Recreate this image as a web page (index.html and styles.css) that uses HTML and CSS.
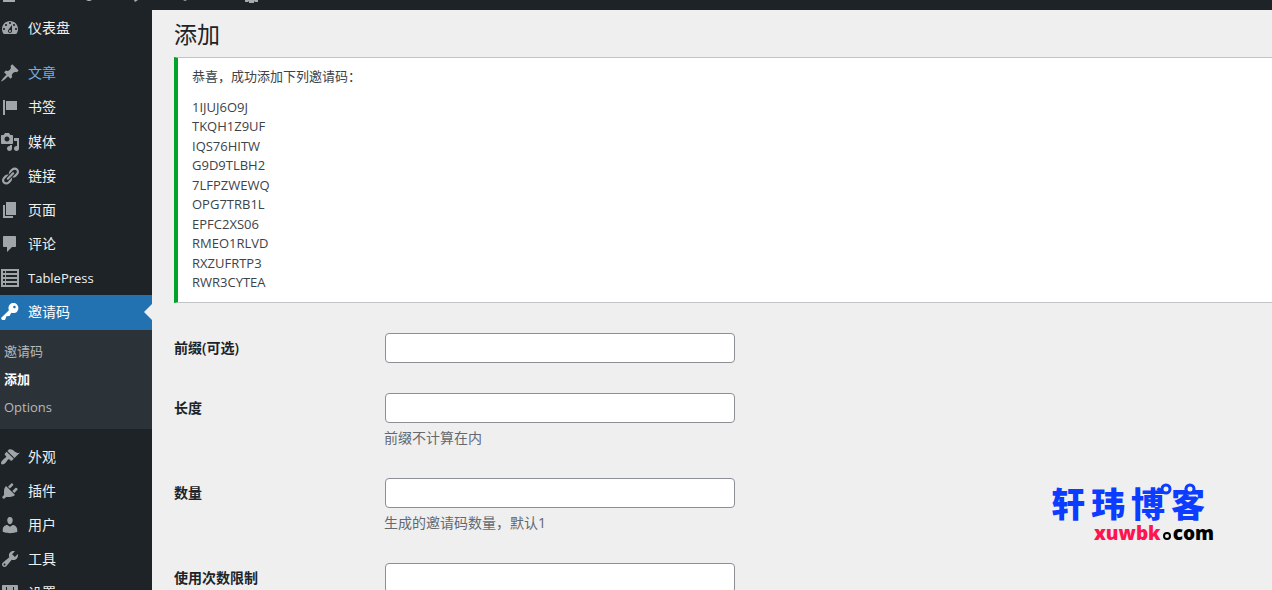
FILE: index.html
```html
<!DOCTYPE html>
<html lang="zh-CN">
<head>
<meta charset="utf-8">
<title>添加</title>
<link rel="stylesheet" href="styles.css">
</head>
<body>
<header class="adminbar">
  <svg class="adminbar-icons" width="270" height="10" viewBox="0 0 270 10" aria-hidden="true">
    <path d="M3 0h12v2H3zM86 0h6l-2 1h-2zM134 0h4l-3 2zM183 0h4l-2 1z"/>
    <path d="M245 0h13v2h-3l-1-1v2h-5V1l-1 1h-3z"/>
  </svg>
</header>
<div class="layout">
  <nav class="sidebar">
    <ul class="menu">
      <li><a class="menu-link" href="#"><svg class="icon" viewBox="0 0 20 20"><path fill-rule="evenodd" d="M3.76 16h12.48c1.1-1.37 1.76-3.11 1.76-5 0-4.42-3.58-8-8-8s-8 3.58-8 8c0 1.89.66 3.63 1.76 5zM10 4c.55 0 1 .45 1 1s-.45 1-1 1-1-.45-1-1 .45-1 1-1zM6 6c.55 0 1 .45 1 1s-.45 1-1 1-1-.45-1-1 .45-1 1-1zm8 0c.55 0 1 .45 1 1s-.45 1-1 1-1-.45-1-1 .45-1 1-1zm-5.37 5.55L12 7v6c0 1.1-.9 2-2 2s-2-.9-2-2c0-.57.24-1.08.63-1.45zM4 10c.55 0 1 .45 1 1s-.45 1-1 1-1-.45-1-1 .45-1 1-1zm12 0c.55 0 1 .45 1 1s-.45 1-1 1-1-.45-1-1 .45-1 1-1zm-5 3c0-.55-.45-1-1-1s-1 .45-1 1 .45 1 1 1 1-.45 1-1z"/></svg>仪表盘</a></li>
      <li class="separator"></li>
      <li><a class="menu-link menu-link-hover" href="#"><svg class="icon" viewBox="0 0 20 20"><path d="M10.44 3.02l1.82-1.82 6.36 6.35-1.83 1.82c-1.05-.68-2.48-.57-3.41.36l-.75.75c-.92.93-1.04 2.35-.35 3.41l-1.83 1.82-2.41-2.41-2.8 2.79c-.42.42-3.38 2.71-3.8 2.29s1.86-3.39 2.28-3.81l2.79-2.79L4.1 9.36l1.83-1.82c1.05.69 2.48.57 3.4-.36l.75-.75c.93-.92 1.05-2.35.36-3.41z"/></svg>文章</a></li>
      <li><a class="menu-link" href="#"><svg class="icon" viewBox="0 0 20 20"><path d="M5 18V3H3v15h2zm1-5V4h11v9z"/></svg>书签</a></li>
      <li><a class="menu-link" href="#"><svg class="icon" viewBox="0 0 20 20"><path fill-rule="evenodd" d="M13 11V4c0-.55-.45-1-1-1h-1.67L9 1H5L3.67 3H2c-.55 0-1 .45-1 1v7c0 .55.45 1 1 1h10c.55 0 1-.45 1-1zM7 4.5c1.38 0 2.5 1.12 2.5 2.5S8.38 9.5 7 9.5 4.5 8.38 4.5 7 5.62 4.5 7 4.5zM14 6h5v10.5c0 1.38-1.12 2.5-2.5 2.5S14 17.88 14 16.5s1.12-2.5 2.5-2.5c.17 0 .34.02.5.05V9h-3V6zm-4 8.05V13h2v3.5c0 1.38-1.12 2.5-2.5 2.5S7 17.88 7 16.5 8.12 14 9.5 14c.17 0 .34.02.5.05z"/></svg>媒体</a></li>
      <li><a class="menu-link" href="#"><svg class="icon" viewBox="0 0 20 20"><path d="M17.74 2.76c1.68 1.69 1.68 4.41 0 6.1l-1.53 1.52c-1.12 1.12-2.7 1.47-4.14 1.09l2.62-2.61.76-.77.76-.76c.84-.84.84-2.2 0-3.04-.84-.85-2.2-.85-3.04 0l-.77.76-3.38 3.38c-.37-1.44-.02-3.02 1.1-4.14l1.52-1.53c1.69-1.68 4.42-1.68 6.1 0zM8.59 13.43l5.34-5.34c.42-.42.42-1.1 0-1.52-.44-.43-1.13-.39-1.53 0l-5.33 5.34c-.42.42-.42 1.1 0 1.52.44.43 1.13.39 1.52 0zm-.76 2.29l4.14-4.15c.38 1.44.03 3.02-1.09 4.14l-1.52 1.53c-1.69 1.68-4.41 1.68-6.1 0-1.68-1.68-1.68-4.42 0-6.1l1.53-1.52c1.12-1.12 2.7-1.47 4.14-1.1l-4.14 4.15c-.85.84-.85 2.2 0 3.05.84.84 2.2.84 3.04 0z"/></svg>链接</a></li>
      <li><a class="menu-link" href="#"><svg class="icon" viewBox="0 0 20 20"><path d="M6 15V2h10v13H6zm-1 1h8v2H3V5h2v11z"/></svg>页面</a></li>
      <li><a class="menu-link" href="#"><svg class="icon" viewBox="0 0 20 20"><path d="M4 2h11c.6 0 1 .4 1 1v9c0 .6-.4 1-1 1h-3l-5 5v-5H4c-.6 0-1-.4-1-1V3c0-.6.4-1 1-1z"/></svg>评论</a></li>
      <li><a class="menu-link menu-link-latin" href="#"><svg class="icon" viewBox="0 0 20 20"><path fill-rule="evenodd" d="M1 1h18v18H1zM3 3v2h2V3zM6 3v2h11V3zM3 7v2h2V7zM6 7v2h11V7zM3 11v2h2v-2zM6 11v2h11v-2zM3 15v2h2v-2zM6 15v2h11v-2z"/></svg>TablePress</a></li>
      <li>
        <a class="menu-link menu-link-current" href="#"><svg class="icon" viewBox="0 0 20 20"><path fill-rule="evenodd" d="M16.95 2.58c1.96 1.95 1.96 5.12 0 7.07-1.51 1.51-3.75 1.84-5.59 1.01l-1.87 3.31-2.99.31L5 18H2l-1-2 7.95-7.69c-.92-1.87-.62-4.18.93-5.73 1.95-1.96 5.12-1.96 7.07 0zm-2.51 3.79c.74 0 1.33-.6 1.33-1.34 0-.73-.59-1.33-1.33-1.33-.73 0-1.33.6-1.33 1.33 0 .74.6 1.34 1.33 1.34z"/></svg>邀请码</a>
        <ul class="submenu">
          <li><a class="submenu-link" href="#">邀请码</a></li>
          <li><a class="submenu-link submenu-link-current" href="#">添加</a></li>
          <li><a class="submenu-link" href="#">Options</a></li>
        </ul>
      </li>
      <li class="separator"></li>
      <li><a class="menu-link" href="#"><svg class="icon" viewBox="0 0 20 20"><path d="M14.48 11.06L7.41 3.99l1.5-1.5c.5-.56 2.3-.47 3.51.32 1.21.8 1.43 1.28 2.91 2.1 1.18.64 2.45 1.26 4.45.85zm-.71.71L6.7 4.7 4.93 6.47c-.39.39-.39 1.02 0 1.41l1.06 1.06c.39.39.39 1.03 0 1.42-.6.6-1.43 1.11-2.21 1.69-.35.26-.7.53-1.01.84C1.43 14.23.4 16.08 1.4 17.07c.99 1 2.84-.03 4.18-1.36.31-.31.58-.66.85-1.02.57-.78 1.08-1.61 1.69-2.21.39-.39 1.02-.39 1.41 0l1.06 1.06c.39.39 1.02.39 1.41 0z"/></svg>外观</a></li>
      <li><a class="menu-link" href="#"><svg class="icon" viewBox="0 0 20 20"><path d="M13.11 4.36L9.87 7.6 8 5.73l3.24-3.24c.35-.34 1.05-.2 1.56.32.52.51.66 1.21.31 1.55zm-8 1.77l.91-1.12 9.01 9.01-1.19.84c-.71.71-2.63 1.16-3.82 1.16H6.14L4.9 17.26c-.59.59-1.54.59-2.12 0-.59-.58-.59-1.53 0-2.12l1.24-1.24v-3.88c0-1.13.4-3.19 1.09-3.89zm7.26 3.97l3.24-3.24c.34-.35 1.04-.21 1.55.31.52.51.66 1.21.31 1.55l-3.24 3.25z"/></svg>插件</a></li>
      <li><a class="menu-link" href="#"><svg class="icon" viewBox="0 0 20 20"><path d="M10 9.25c-2.27 0-2.73-3.44-2.73-3.44C7 4.02 7.82 2 9.97 2c2.16 0 2.98 2.02 2.71 3.81 0 0-.41 3.44-2.68 3.44zm0 2.57L12.72 10c2.39 0 4.52 2.33 4.52 4.53v2.49s-3.65 1.13-7.24 1.13c-3.65 0-7.24-1.13-7.24-1.13v-2.49c0-2.25 1.94-4.48 4.47-4.48z"/></svg>用户</a></li>
      <li><a class="menu-link" href="#"><svg class="icon" viewBox="0 0 20 20"><path fill-rule="evenodd" d="M16.68 9.77c-1.34 1.34-3.3 1.67-4.95.99l-5.41 6.52c-.99.99-2.59.99-3.58 0s-.99-2.59 0-3.57l6.52-5.42c-.68-1.65-.35-3.61.99-4.95 1.28-1.28 3.12-1.62 4.72-1.06l-2.89 2.89 2.82 2.82 2.86-2.87c.53 1.58.18 3.39-1.08 4.65zM3.81 16.21c.4.39 1.04.39 1.43 0 .4-.4.4-1.04 0-1.43-.39-.4-1.03-.4-1.43 0-.39.39-.39 1.03 0 1.43z"/></svg>工具</a></li>
      <li><a class="menu-link" href="#"><svg class="icon" viewBox="0 0 20 20"><path fill-rule="evenodd" d="M3 2h14c.6 0 1 .4 1 1v14c0 .6-.4 1-1 1H3c-.6 0-1-.4-1-1V3c0-.6.4-1 1-1zM6 4v5H5v2h1v5h1v-5h1V9H7V4zM13 4v7h-1v2h1v3h1v-3h1v-2h-1V4z"/></svg>设置</a></li>
    </ul>
  </nav>
  <main class="content">
    <h1 class="title">添加</h1>
    <div class="notice">
      <p>恭喜，成功添加下列邀请码：</p>
      <p>1IJUJ6O9J<br>TKQH1Z9UF<br>IQS76HITW<br>G9D9TLBH2<br>7LFPZWEWQ<br>OPG7TRB1L<br>EPFC2XS06<br>RMEO1RLVD<br>RXZUFRTP3<br>RWR3CYTEA</p>
    </div>
    <form class="form">
      <div class="row">
        <label class="label" for="prefix">前缀(可选)</label>
        <div class="field"><input class="input" id="prefix" type="text"></div>
      </div>
      <div class="row">
        <label class="label" for="length">长度</label>
        <div class="field"><input class="input" id="length" type="text"><p class="hint">前缀不计算在内</p></div>
      </div>
      <div class="row">
        <label class="label" for="count">数量</label>
        <div class="field"><input class="input" id="count" type="text"><p class="hint">生成的邀请码数量，默认1</p></div>
      </div>
      <div class="row">
        <label class="label" for="limit">使用次数限制</label>
        <div class="field"><input class="input" id="limit" type="text"></div>
      </div>
    </form>
  </main>
</div>
<div class="watermark">
  <div class="watermark-name">
    <span>轩</span><span>玮</span><span>博</span><span>客</span>
    <svg class="watermark-rings" width="44" height="14" viewBox="0 0 44 14" aria-hidden="true"><circle cx="8" cy="7" r="4"/><circle cx="32" cy="7" r="4"/></svg>
  </div>
  <div class="watermark-site"><span class="watermark-host">xuwbk</span><span class="watermark-dot"></span>com</div>
</div>
</body>
</html>
```
FILE: styles.css
```css
* { box-sizing: border-box; }

body {
  margin: 0;
  height: 100vh;
  overflow: hidden;
  display: flex;
  flex-direction: column;
  position: relative;
  background: #efefef;
  color: #3c434a;
  font: 13px/1.5 "Open Sans", "Noto Sans CJK SC", sans-serif;
}

ul { list-style: none; margin: 0; padding: 0; }
a { text-decoration: none; }

.adminbar { flex: none; height: 10px; background: #1d2327; }
.adminbar-icons { display: block; fill: #a7aaad; }

.layout { flex: 1; min-height: 0; display: flex; }

.sidebar { flex: none; width: 152px; padding-top: 1px; background: #1d2327; }
.separator { height: 11px; }

.menu-link {
  display: flex;
  align-items: center;
  gap: 8px;
  padding: 8px 0;
  position: relative;
  color: #f0f0f1;
  font-size: 14px;
  line-height: 1.3;
}
.menu-link-latin { font-size: 13px; line-height: 18px; }
.icon { flex: none; width: 20px; height: 20px; margin: -1px 0; fill: #a0a5aa; }
.menu-link-hover { color: #72aee6; }
.menu-link-current { background: #2271b1; color: #fff; }
.menu-link-current .icon { fill: #fff; }
.menu-link-current::after {
  content: "";
  position: absolute;
  right: 0;
  top: 50%;
  margin-top: -8px;
  border: 8px solid transparent;
  border-left-width: 0;
  border-right-color: #efefef;
}

.submenu { padding: 7px 0 8px; background: #2c3338; }
.submenu-link { display: block; padding: 0 4px; color: #b4b9be; line-height: 28px; }
.submenu-link-current { color: #fff; font-weight: 600; }

.content { flex: 1; min-width: 0; padding: 6px 0 0 22px; }
.title { margin: 0; padding: 0 0 5px; color: #1d2327; font-size: 23px; font-weight: 400; line-height: 36px; }

.notice {
  padding: 9px 14px;
  background: #fff;
  border: 1px solid #c3c4c7;
  border-left: 4px solid #00a32a;
  border-right: 0;
}
.notice p { margin: 0; }
.notice p + p { margin-top: 11px; }

.form { padding-top: 15px; font-size: 14px; }
.row { display: flex; padding: 15px 0; }
.label { flex: none; width: 210px; color: #1d2327; font-weight: 600; line-height: 30px; }
.input {
  display: block;
  width: 350px;
  max-width: 100%;
  height: 30px;
  margin: 0 1px;
  padding: 0 8px;
  border: 1px solid #8c8f94;
  border-radius: 4px;
  background: #fff;
  color: #2c3338;
  font: inherit;
}
.hint { margin: 4px 0 0; color: #646970; line-height: 21px; }

.watermark { position: absolute; right: 58px; bottom: 47px; }
.watermark-name {
  position: relative;
  display: flex;
  gap: 6px;
  padding-right: 9px;
  color: #0c3cff;
  font-family: "Noto Sans CJK SC", sans-serif;
  font-size: 34px;
  font-weight: 900;
  line-height: 40px;
}
.watermark-rings { position: absolute; right: 12px; top: -1px; fill: #efefef; stroke: #0c3cff; stroke-width: 3; }
.watermark-site {
  display: flex;
  justify-content: flex-end;
  align-items: baseline;
  color: #000;
  font: 800 19px/20px "Open Sans", sans-serif;
}
.watermark-host { color: #ff1450; }
.watermark-dot { width: 8px; height: 8px; margin: 0 2px; border: 2px solid #000; border-radius: 50%; }
```
